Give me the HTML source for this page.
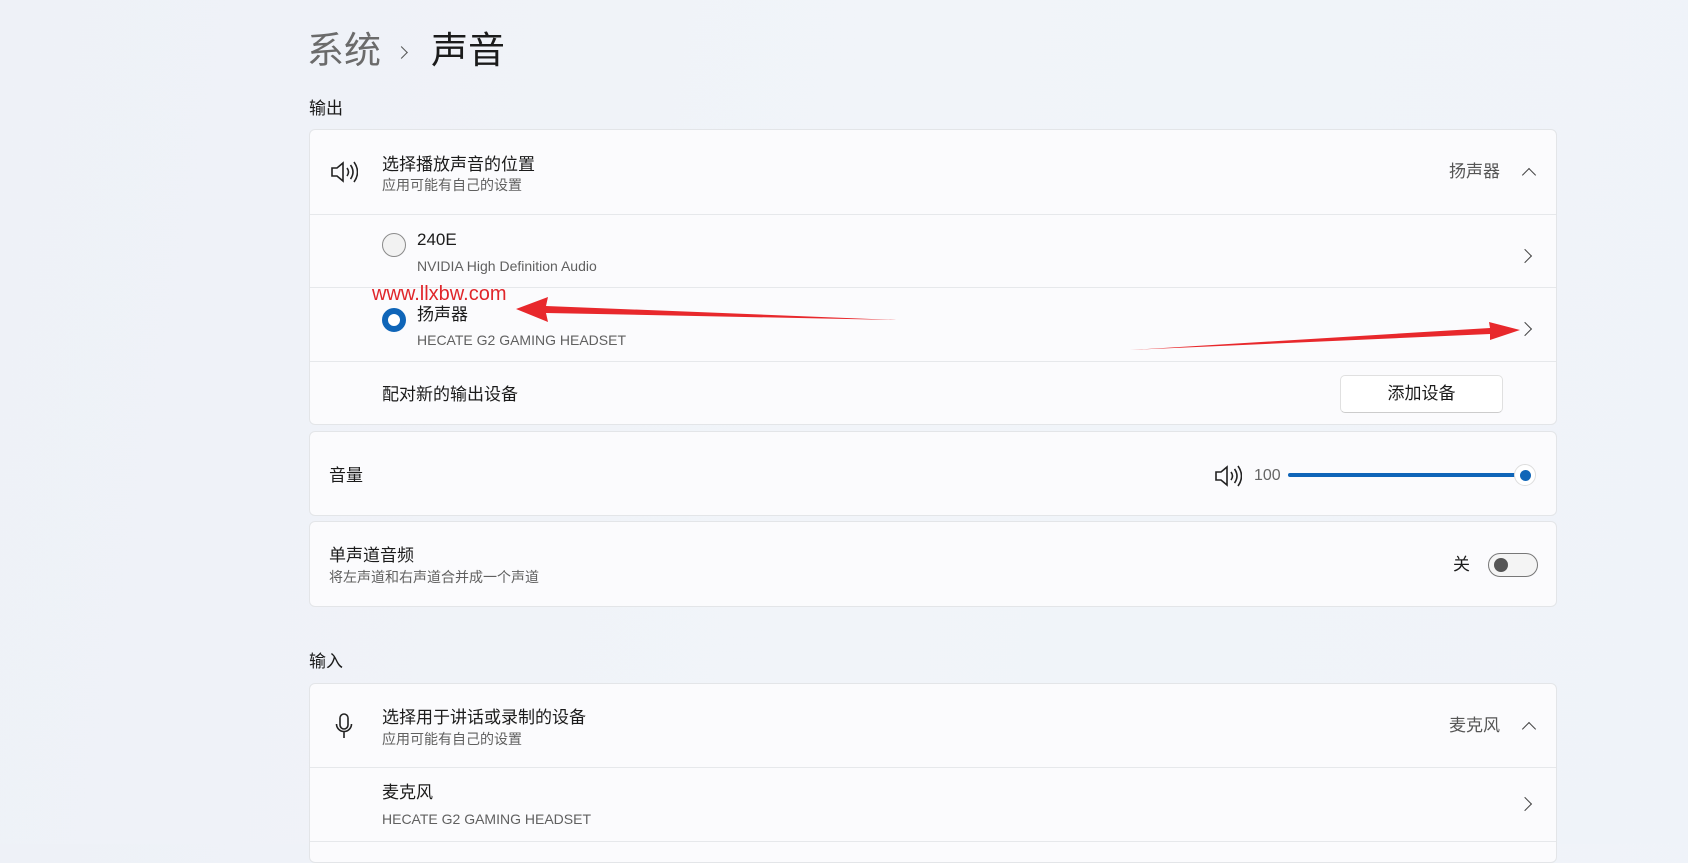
<!DOCTYPE html>
<html><head><meta charset="utf-8"><style>
*{margin:0;padding:0;box-sizing:border-box}
body{width:1688px;height:844px;overflow:hidden;background:linear-gradient(100deg,#eef1f7 0%,#f1f4f9 50%,#eff3f9 100%);font-family:"Liberation Sans","Noto Sans CJK SC",sans-serif;color:#1b1b1b;position:relative}
.a{position:absolute;white-space:nowrap}
.card{position:absolute;left:309px;width:1248px;background:#fbfbfd;border:1px solid #e3e5e8;border-radius:6px}
.div{position:absolute;left:0;right:0;height:1px;background:#e6e8eb}
.t{font-size:17px;color:#1b1b1b;line-height:20px}
.s{font-size:14px;color:#606060;line-height:18px}
.chev{position:absolute;width:10px;height:10px;border-right:1.5px solid #444;border-top:1.5px solid #444}
</style></head><body>
<div class="a" style="left:307px;top:28px;font-size:37px;line-height:46px;color:#6b6b6b">系统</div>
<div class="chev" style="left:397px;top:48px;width:9px;height:9px;transform:rotate(45deg);border-color:#555"></div>
<div class="a" style="left:431px;top:28px;font-size:37px;line-height:46px;color:#1b1b1b">声音</div>
<div class="a t" style="left:309px;top:99px">输出</div>

<div class="card" style="top:129px;height:296px">
  <svg class="a" style="left:20px;top:30px" width="28" height="24" viewBox="0 0 28 24" fill="none" stroke="#222" stroke-width="1.6"><path d="M2 8h5l6-5v18l-6-5H2z"/><path d="M17 8q3 4 0 8"/><path d="M20.5 5q5 7 0 14"/><path d="M24 2q7 10 0 20"/></svg>
  <div class="a t" style="left:72px;top:25px">选择播放声音的位置</div>
  <div class="a s" style="left:72px;top:46px">应用可能有自己的设置</div>
  <div class="a t" style="left:1139px;top:32px;color:#555">扬声器</div>
  <div class="chev" style="left:1214px;top:40px;transform:rotate(-45deg)"></div>
  <div class="div" style="top:84px"></div>
  <div class="a" style="left:72px;top:103px;width:24px;height:24px;border-radius:50%;border:1.5px solid #8a8a8a;background:#f2f2f2"></div>
  <div class="a t" style="left:107px;top:100px">240E</div>
  <div class="a s" style="left:107px;top:127px">NVIDIA High Definition Audio</div>
  <div class="chev" style="left:1210px;top:121px;transform:rotate(45deg)"></div>
  <div class="div" style="top:157px"></div>
  <div class="a" style="left:72px;top:178px;width:24px;height:24px;border-radius:50%;border:6px solid #0f65b8;background:#fff"></div>
  <div class="a t" style="left:107px;top:175px">扬声器</div>
  <div class="a s" style="left:107px;top:201px">HECATE G2 GAMING HEADSET</div>
  <div class="chev" style="left:1210px;top:194px;transform:rotate(45deg)"></div>
  <div class="div" style="top:231px"></div>
  <div class="a t" style="left:72px;top:255px">配对新的输出设备</div>
  <div class="a" style="left:1030px;top:245px;width:163px;height:38px;background:#fff;border:1px solid #e0e0e0;border-bottom-color:#ccc;border-radius:5px;font-size:17px;text-align:center;line-height:36px">添加设备</div>
</div>

<div class="card" style="top:431px;height:85px">
  <div class="a t" style="left:19px;top:34px">音量</div>
  <svg class="a" style="left:904px;top:32px" width="28" height="24" viewBox="0 0 28 24" fill="none" stroke="#222" stroke-width="1.6"><path d="M2 8h5l6-5v18l-6-5H2z"/><path d="M17 8q3 4 0 8"/><path d="M20.5 5q5 7 0 14"/><path d="M24 2q7 10 0 20"/></svg>
  <div class="a" style="left:944px;top:34px;font-size:16px;line-height:20px;color:#666">100</div>
  <div class="a" style="left:978px;top:41px;width:236px;height:4px;border-radius:2px;background:#0f65b8"></div>
  <div class="a" style="left:1204px;top:32px;width:22px;height:22px;border-radius:50%;background:#fff;border:1px solid #ddd"></div>
  <div class="a" style="left:1210px;top:38px;width:11px;height:11px;border-radius:50%;background:#0f65b8"></div>
</div>

<div class="card" style="top:521px;height:86px">
  <div class="a t" style="left:19px;top:24px">单声道音频</div>
  <div class="a s" style="left:19px;top:46px">将左声道和右声道合并成一个声道</div>
  <div class="a t" style="left:1143px;top:33px">关</div>
  <div class="a" style="left:1178px;top:31px;width:50px;height:24px;border-radius:12px;border:1.5px solid #777;background:#f4f4f4"></div>
  <div class="a" style="left:1184px;top:36px;width:14px;height:14px;border-radius:50%;background:#555"></div>
</div>

<div class="a t" style="left:309px;top:652px">输入</div>
<div class="card" style="top:683px;height:180px">
  <svg class="a" style="left:25px;top:28px" width="18" height="28" viewBox="0 0 18 28" fill="none" stroke="#222" stroke-width="1.6"><rect x="5" y="2" width="8" height="15" rx="4"/><path d="M1.5 12a7.5 7.5 0 0 0 15 0M9 20v6"/></svg>
  <div class="a t" style="left:72px;top:24px">选择用于讲话或录制的设备</div>
  <div class="a s" style="left:72px;top:46px">应用可能有自己的设置</div>
  <div class="a t" style="left:1139px;top:32px;color:#555">麦克风</div>
  <div class="chev" style="left:1214px;top:40px;transform:rotate(-45deg)"></div>
  <div class="div" style="top:83px"></div>
  <div class="a t" style="left:72px;top:99px">麦克风</div>
  <div class="a s" style="left:72px;top:126px">HECATE G2 GAMING HEADSET</div>
  <div class="chev" style="left:1210px;top:115px;transform:rotate(45deg)"></div>
  <div class="div" style="top:157px"></div>
</div>

<div class="a" style="left:372px;top:283px;font-size:20px;color:#e0262b">www.llxbw.com</div>
<svg class="a" style="left:0;top:0" width="1688" height="844"><polygon points="516,309 548,297 546,306 897,320 546,313 548,322" fill="#e8282c"/><polygon points="1130,350 1490,328 1489,322 1520,330 1490,340 1490,334" fill="#e8282c"/></svg>
</body></html>
